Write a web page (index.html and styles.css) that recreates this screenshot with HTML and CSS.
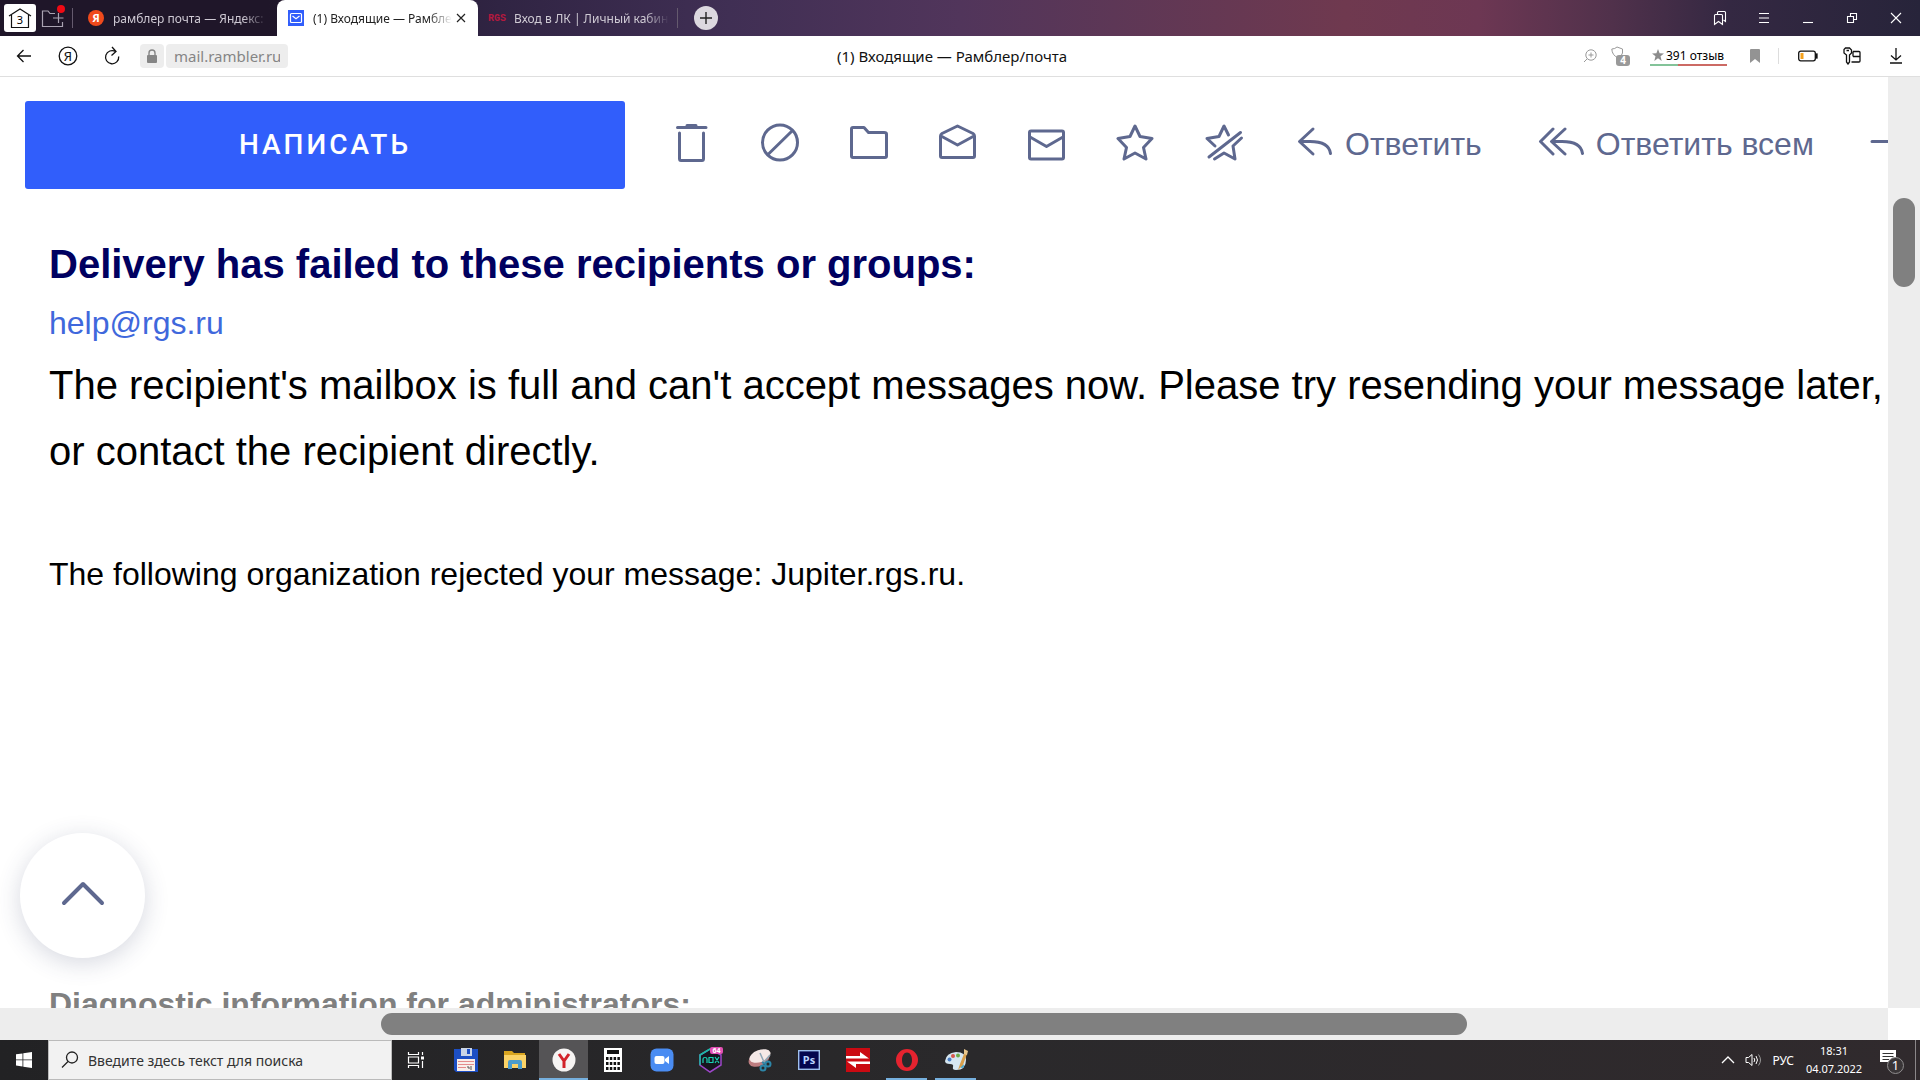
FILE: index.html
```html
<!DOCTYPE html>
<html lang="ru">
<head>
<meta charset="utf-8">
<title>(1) Входящие — Рамблер/почта</title>
<link rel="stylesheet" href="styles.css">
</head>
<body>
<header class="tabbar">
  <button class="home" aria-label="Табло"><svg width="26" height="22" viewBox="0 0 26 22"><path d="M2 9 13 2 24 9M4.500 8V20.500H21.500V8" fill="none" stroke="#111" stroke-width="1.200"/><text x="13" y="17" text-anchor="middle" class="home-num">3</text></svg></button>
  <button class="group" aria-label="Группы вкладок"><svg width="26" height="26" viewBox="0 0 26 26" fill="none" stroke="#aaa3b2" stroke-width="1.200"><path d="M14 8.500H9L7 6H1.500V21.500H21.500V17M17.500 8V18M12 13H22.500"/><circle cx="20" cy="4" r="4" fill="#f00a14" stroke="none"/></svg></button>
  <span class="divider"></span>
  <a class="tab" href="#search"><svg width="16" height="16" viewBox="0 0 16 16"><circle cx="8" cy="8" r="8" fill="#f04a1c"/><text x="8" y="12" text-anchor="middle" class="ya-letter">Я</text></svg><span class="tab-text">рамблер почта — Яндекс:</span></a>
  <div class="tab tab-active"><svg width="16" height="16" viewBox="0 0 16 16"><rect width="16" height="16" fill="#315efb"/><rect x="2.500" y="3.500" width="11" height="9" rx="1" fill="none" stroke="#fff" stroke-width="1.200"/><path d="m4.500 6 3.500 2.800L11.500 6" fill="none" stroke="#fff" stroke-width="1.200"/></svg><a class="tab-text" href="#mail">(1) Входящие — Рамбле</a><button class="tab-close" aria-label="Закрыть вкладку"><svg width="10" height="10" viewBox="0 0 10 10"><path d="m1 1 8 8M9 1 1 9" stroke="#222" stroke-width="1.200"/></svg></button></div>
  <a class="tab tab-last" href="#rgs"><span class="rgs">RGS</span><span class="tab-text">Вход в ЛК | Личный кабин</span></a>
  <span class="divider"></span>
  <button class="plus" aria-label="Новая вкладка"><svg width="12" height="12" viewBox="0 0 12 12"><path d="M6 0V12M0 6H12" stroke="#222" stroke-width="1.400"/></svg></button>
  <div class="window-buttons">
    <button aria-label="Закладки"><svg width="14" height="16" viewBox="0 0 14 16"><path d="M4.500 4V2.500q0-1 1-1H11.500q1 0 1 1V11.500l-2-1.500M1.500 5.500q0-1 1-1H8.500q1 0 1 1V14.500L5.500 11.500 1.500 14.500Z"/></svg></button>
    <button aria-label="Меню"><svg width="12" height="12" viewBox="0 0 12 12"><path d="M1 1.500H11M1 6H11M1 10.500H11"/></svg></button>
    <button aria-label="Свернуть"><svg width="12" height="12" viewBox="0 0 12 12"><path d="M1 10.500H11"/></svg></button>
    <button aria-label="Окно"><svg width="12" height="12" viewBox="0 0 12 12"><path d="M1.500 4.500H7.500V10.500H1.500ZM4.500 4.500V1.500H10.500V7.500H7.500"/></svg></button>
    <button aria-label="Закрыть"><svg width="12" height="12" viewBox="0 0 12 12"><path d="m1 1 10 10M11 1 1 11"/></svg></button>
  </div>
</header>
<nav class="addressbar">
  <div class="address-left">
    <button class="nav-btn" aria-label="Назад"><svg width="16" height="16" viewBox="0 0 16 16"><path d="M15 8H1.500M7.500 2 1.500 8l6 6"/></svg></button>
    <button class="nav-btn" aria-label="Яндекс"><svg width="20" height="20" viewBox="0 0 20 20"><circle cx="10" cy="10" r="8.800"/><text x="10" y="15" text-anchor="middle" class="ya-mark">Я</text></svg></button>
    <button class="nav-btn" aria-label="Обновить"><svg width="18" height="20" viewBox="0 0 18 20"><path d="M12.500 5.500A6.600 6.600 0 1 0 15.700 10.500M9 1l4 4.500-4.500 4"/></svg></button>
    <button class="lock" aria-label="Защита"><svg width="12" height="14" viewBox="0 0 12 14"><rect x="1" y="6" width="10" height="8" rx="1" fill="#858585"/><path d="M3 7V4a3 3 0 0 1 6 0V7" fill="none" stroke="#858585" stroke-width="1.400"/></svg></button>
    <input class="url" aria-label="Адрес" value="mail.rambler.ru">
  </div>
  <div class="page-title">(1) Входящие — Рамблер/почта</div>
  <div class="address-right">
    <button class="zoom-btn" aria-label="Масштаб"><svg width="14" height="14" viewBox="0 0 14 14" fill="none" stroke="#999"><circle cx="8" cy="6" r="5.200"/><path d="M8 3.500V8.500M5.500 6H10.500M4.200 9.800 1 13"/></svg></button>
    <button class="shield" aria-label="Protect"><svg width="20" height="20" viewBox="0 0 20 20"><path d="M6 1 11.500 3V7Q11 10 7 12 1 9 .800 3Q4 3 6 1Z" fill="none" stroke="#999"/><rect x="5" y="9" width="14" height="11" rx="3" fill="#999"/><text x="12" y="18" text-anchor="middle" class="shield-num">4</text></svg></button>
    <a class="reviews" href="#reviews"><svg width="12" height="12" viewBox="0 0 12 12"><path d="m6 0 1.600 4.200L12 4.500 8.500 7.200 9.700 12 6 9.200 2.300 12 3.500 7.200 0 4.500l4.400-.300Z" fill="#8c8c8c"/></svg><span>391 отзыв</span></a>
    <button class="mark" aria-label="В закладки"><svg width="10" height="14" viewBox="0 0 10 14"><path d="M0 1q0-1 1-1H9q1 0 1 1V14L5 10 0 14Z" fill="#939393"/></svg></button>
    <span class="address-divider"></span>
    <button class="nav-btn" aria-label="Батарея"><svg width="20" height="12" viewBox="0 0 20 12"><rect x=".700" y="1.200" width="16.600" height="9.600" rx="2"/><path d="M18 4h1v4h-1Z" fill="#111"/><rect x="2.500" y="3" width="3" height="6" fill="#f5a11c" stroke="none"/></svg></button>
    <button class="nav-btn" aria-label="Пароли"><svg width="18" height="18" viewBox="0 0 18 18"><path d="M2.500 1H6.500L8.500 3V6L6.500 8V15L5 17 3.500 15V8L1 6V2.500ZM3.500 3.500H6M10 4.500H16Q17 4.500 17 5.500V14Q17 15 16 15H8.500M10 9.500H17M10 9.500V4.500"/></svg></button>
    <button class="nav-btn" aria-label="Загрузки"><svg width="14" height="16" viewBox="0 0 14 16"><path d="M7 0V12M2 7.500 7 12l5-4.500M1 15H13"/></svg></button>
  </div>
</nav>
<main class="viewport">
  <div class="page">
    <div class="mailbar">
      <button class="compose">НАПИСАТЬ</button>
      <div class="tools">
        <button aria-label="Удалить"><svg width="40" height="40" viewBox="0 0 40 40"><path d="M6.500 5.500H35M16 3.500H25M8.500 11V36.500Q8.500 38.500 10 38.500H31Q32.500 38.500 32.500 36.500V11"/></svg></button>
        <button aria-label="Спам"><svg width="40" height="40" viewBox="0 0 40 40"><circle cx="20" cy="20.500" r="17.500"/><path d="M8.500 32 32 9"/></svg></button>
        <button aria-label="В папку"><svg width="40" height="40" viewBox="0 0 40 40"><path d="M4 5.500H15L19.500 10.500H35Q37.500 10.500 37.500 12V34Q37.500 35.500 36 35.500H4Q2.500 35.500 2.500 34V7Q2.500 5.500 4 5.500Z"/></svg></button>
        <button aria-label="Прочитано"><svg width="40" height="40" viewBox="0 0 40 40"><path d="M2.500 14Q2.500 12.500 4 11.500L19.500 4 35 11.500Q36.500 12.500 36.500 14V34Q36.500 35.500 35 35.500H4Q2.500 35.500 2.500 34ZM3 14 19.500 23 36 14"/></svg></button>
        <button aria-label="Не прочитано"><svg width="40" height="40" viewBox="0 0 40 40"><rect x="2.500" y="9" width="34" height="28" rx="1.500"/><path d="m3 15 16.500 9.500L36 15"/></svg></button>
        <button aria-label="Отметить"><svg width="40" height="40" viewBox="0 0 40 40"><path d="m19 4 5 10.500 12 2-8.500 9L30 37 19 31 8 37l2.500-11.500-8.500-9 12-2Z"/></svg></button>
        <button aria-label="Снять отметку"><svg width="40" height="40" viewBox="0 0 40 40"><path d="M23.500 13 19 4 14 14.500 2 16.500 10 24M4 35 35.500 10.500M36.500 16 28 24 30 37 19 31 9.500 37"/></svg></button>
      </div>
      <button class="reply"><svg width="36" height="32" viewBox="0 0 36 32"><path d="M16 3 2.500 15.500 16 28M3 15.500H13Q32 15.500 33.500 27.500"/></svg>Ответить</button>
      <button class="reply"><svg width="46" height="32" viewBox="0 0 46 32"><path d="M15 3 2.500 15.500 15 28M27 3 13.500 15.500 27 28M14 15.500H24Q43 15.500 44.500 27.500"/></svg>Ответить всем</button>
      <button class="reply" aria-label="Переслать"><svg width="40" height="32" viewBox="0 0 40 32"><path d="M2 15.500H37M26 3 38 15.500 26 28"/></svg></button>
    </div>
    <article class="letter">
      <h1>Delivery has failed to these recipients or groups:</h1>
      <p class="recipient"><a href="mailto:help@rgs.ru">help@rgs.ru</a></p>
      <p class="reason">The recipient's mailbox is full and can't accept messages now. Please try resending your message later, or contact the recipient directly.</p>
      <p class="rejected">The following organization rejected your message: Jupiter.rgs.ru.</p>
      <h2>Diagnostic information for administrators:</h2>
    </article>
    <button class="to-top" aria-label="Наверх"><svg width="48" height="30" viewBox="0 0 48 30"><path d="M5 22 24 3 43 22" fill="none" stroke="#5e688f" stroke-width="4" stroke-linecap="round" stroke-linejoin="round"/></svg></button>
  </div>
  <div class="vscroll"><div class="vthumb"></div></div>
  <div class="hscroll"><div class="hthumb"></div></div>
</main>
<footer class="taskbar">
  <button class="start" aria-label="Пуск"><svg width="16" height="16" viewBox="0 0 16 16" fill="#fff"><path d="M0 2.300 6.500 1.400V7.500H0ZM7.300 1.300 16 0V7.500H7.300ZM0 8.300H6.500V14.500L0 13.600ZM7.300 8.300H16V16L7.300 14.700Z"/></svg></button>
  <label class="search"><svg width="18" height="18" viewBox="0 0 18 18" fill="none" stroke="#222" stroke-width="1.300"><circle cx="11" cy="6.500" r="5.500"/><path d="M7 10.500 1 16.500"/></svg><input aria-label="Поиск" placeholder="Введите здесь текст для поиска"></label>
  <button class="app task-view" aria-label="Представление задач"><svg width="18" height="16" viewBox="0 0 18 16" fill="none" stroke="#fff" stroke-width="1.200"><path d="M1.500 0V2.500H11.500V0M1.500 16V13.500H11.500V16M1.500 5H11.500V11H1.500ZM15.500 0V3M15.500 9V16"/><path d="M14 4.500h3v3h-3Z" fill="#fff" stroke="none"/></svg></button>
  <button class="app" aria-label="Total Commander"><svg width="24" height="24" viewBox="0 0 24 24"><path d="M0 1H24V24H2L0 22Z" fill="#1d4fc4"/><path d="M7 0H18V8H7Z" fill="#c9d4e6"/><path d="M13 1h3v5h-3Z" fill="#1d4fc4"/><path d="M3 11H21V23H3Z" fill="#f8eeea"/><path d="M4 13.500H20M4 16.500H20M4 19.500H12" stroke="#e38b8b"/><path d="M13 19h2v2M17 18v4" stroke="#555" fill="none"/></svg></button>
  <button class="app" aria-label="Проводник"><svg width="24" height="20" viewBox="0 0 24 20"><path d="M1 1H9L11 3H22V8H1Z" fill="#d9a520"/><path d="M1 5H23V18H1Z" fill="#fbd367"/><path d="M5 19V12Q5 10 7 10H17Q19 10 19 12V19H15V14H9V19Z" fill="#4b9ccc"/></svg></button>
  <button class="app app-current" aria-label="Яндекс Браузер"><svg width="24" height="24" viewBox="0 0 24 24"><circle cx="12" cy="12" r="11.500" fill="#f6f4f3"/><path d="m7 6 5 7 5-7M12 12V20" fill="none" stroke="#d2232a" stroke-width="3"/></svg></button>
  <button class="app" aria-label="Калькулятор"><svg width="18" height="24" viewBox="0 0 18 24"><path d="M0 0H18V24H0Z" fill="#fff"/><path d="M3 4H15" stroke="#111" stroke-width="4"/><path d="M2 10.500H16M2 15.500H16M2 20.500H16" stroke="#111" stroke-width="3" stroke-dasharray="2.500 1.300"/></svg></button>
  <button class="app" aria-label="Zoom"><svg width="24" height="24" viewBox="0 0 24 24"><rect x=".500" y=".500" width="23" height="23" rx="6" fill="#4a8cf2"/><rect x="4.500" y="8" width="10" height="8" rx="2" fill="#fff"/><path d="m15 11 4-3v8l-4-3Z" fill="#fff"/></svg></button>
  <button class="app" aria-label="Nox"><svg width="26" height="26" viewBox="0 0 26 26"><path d="M12 2 23 8V18L12 25 2 18V8Z" fill="#17151f" stroke="#9c46c8" stroke-width="1.500"/><path d="M2 18V8L12 2" fill="none" stroke="#16bfa6" stroke-width="1.500"/><path d="M5 16V12Q5 10.500 7 10.500T9 12V16M11 10.500H15V15.500H11ZM17 10l4 6M21 10l-4 6" fill="none" stroke="#19d3b4" stroke-width="1.200"/><rect x="12" width="13" height="7" rx="2" fill="#e34fb4"/><text x="18.500" y="6" text-anchor="middle" class="nox-num">64</text></svg></button>
  <button class="app" aria-label="Ножницы"><svg width="26" height="24" viewBox="0 0 26 24"><ellipse cx="12" cy="11" rx="11" ry="7" transform="rotate(-25 12 11)" fill="#bd7d80"/><ellipse cx="13" cy="8" rx="11" ry="6" transform="rotate(-20 13 8)" fill="#f5e9e7"/><path d="m13 5 4 9M23 7l-7 8" stroke="#8ea5b5" stroke-width="1.500"/><g fill="none" stroke="#2d86a8" stroke-width="2"><circle cx="16" cy="20" r="2.500"/><circle cx="21" cy="16" r="2.500"/><path d="m15 14 3 2"/></g></svg></button>
  <button class="app" aria-label="Photoshop"><svg width="22" height="20" viewBox="0 0 22 20"><rect x=".700" y=".700" width="20.600" height="18.600" fill="#04064f" stroke="#9fc0ee" stroke-width="1.400"/><text x="11" y="14" text-anchor="middle" class="ps">Ps</text></svg></button>
  <button class="app" aria-label="Конвертер"><svg width="24" height="24" viewBox="0 0 24 24"><path d="M0 0H24V24H0Z" fill="#cb0a12"/><path d="M0 10.500H23L14 4V8H0ZM24 13.500H1L10 20V16H24Z" fill="#fff"/></svg></button>
  <button class="app app-open" aria-label="Opera"><svg width="22" height="22" viewBox="0 0 22 22"><path fill-rule="evenodd" d="M11 0a11 11 0 1 0 0 22 11 11 0 0 0 0-22Zm0 3.500c3 0 5 3.300 5 7.500s-2 7.500-5 7.500-5-3.300-5-7.500 2-7.500 5-7.500Z" fill="#e5232f"/></svg></button>
  <button class="app app-open" aria-label="Paint"><svg width="24" height="24" viewBox="0 0 24 24"><path d="M1 13Q2 5 12 4q10 0 10 8 0 10-10 10-4 0-3-3 1-3-3-3-5 0-5-3Z" fill="#d5e6f1"/><circle cx="5.500" cy="11.500" r="2" fill="#4b7ec5"/><circle cx="9" cy="8" r="2" fill="#d6574d"/><circle cx="14" cy="7.500" r="2" fill="#6eab48"/><circle cx="18" cy="18" r="2" fill="#43a8d3"/><path d="m14 22 2-6 4-10 3 0-4 11Z" fill="#d99f4c"/><path d="m20 6 0-5 4 2-1 4Z" fill="#e6c58c"/></svg></button>
  <div class="tray">
    <button class="tray-up" aria-label="Скрытые значки"><svg width="14" height="8" viewBox="0 0 14 8"><path d="m1 7 6-6 6 6" fill="none" stroke="#fff" stroke-width="1.300"/></svg></button>
    <button class="tray-sound" aria-label="Громкость"><svg width="17" height="14" viewBox="0 0 17 14" fill="none" stroke="#fff"><path d="M1 4.500H3.500L7 1.500V12.500L3.500 9.500H1ZM9 5q1.500 2 0 4M11 3q3 4 0 8"/><path d="M13.500 1.500q4 5.500 0 11" stroke="#999"/></svg></button>
    <button class="lang">РУС</button>
    <time class="clock" datetime="2022-07-04T18:31"><span>18:31</span><span>04.07.2022</span></time>
    <button class="notice" aria-label="Уведомления"><svg width="26" height="26" viewBox="0 0 26 26"><path d="M1 1H17V13H12L9 17V13H1Z" fill="#fff"/><path d="M3.500 4.500H14.500M3.500 7.500H14.500M3.500 10.500H10" stroke="#333"/><circle cx="16.500" cy="16.500" r="8" fill="#393537" stroke="#8f8d8e"/><text x="16.500" y="21" text-anchor="middle" class="notice-num">1</text></svg></button>
  </div>
</footer>
</body>
</html>
```
FILE: styles.css
```css
* { box-sizing: border-box; }

body {
  margin: 0;
  height: 100vh;
  display: flex;
  flex-direction: column;
  overflow: hidden;
  font-family: "Noto Sans", "Open Sans", sans-serif;
  font-size: 12px;
  background: #fff;
}

button {
  display: flex;
  align-items: center;
  justify-content: center;
  flex: none;
  margin: 0;
  padding: 0;
  border: 0;
  background: none;
  color: inherit;
  font: inherit;
}

a { color: inherit; text-decoration: none; }
input { min-width: 0; border: 0; outline: 0; font: inherit; }
svg { display: block; flex: none; }
h1, h2, p { margin: 0; }

/* Tab strip */
.tabbar {
  display: flex;
  align-items: center;
  flex: none;
  height: 36px;
  padding: 0 2px 0 4px;
  background: linear-gradient(90deg, #1f1629 0, #1f1629 14%, #302443 26%, #402f54 38%, #51355b 50%, #5d3756 58%, #6f394f 70%, #6d3753 77%, #50314b 84%, #342842 90%, #27243a 100%);
}
.home { width: 32px; height: 28px; border-radius: 3px; background: #fff; }
.home-num { font-size: 11px; }
.group { width: 26px; margin: 0 5px; }
.divider { flex: none; width: 1px; height: 20px; background: #655a6e; }
.tab {
  display: flex;
  align-items: center;
  flex: none;
  gap: 9px;
  width: 204px;
  height: 36px;
  padding: 0 10px 0 15px;
  color: #cfcad4;
}
.tab-text {
  flex: 1;
  min-width: 0;
  overflow: hidden;
  white-space: nowrap;
  mask-image: linear-gradient(90deg, #000 calc(100% - 24px), transparent);
}
.tab-active {
  width: 201px;
  padding: 0 11px;
  border-radius: 8px 8px 0 0;
  background: #fff;
  color: #222;
}
.tab-close { width: 12px; margin-left: -6px; }
.tab-last { width: 199px; gap: 8px; padding: 0 8px 0 10px; }
.rgs { color: #b3193f; font: bold 10px "Liberation Mono", monospace; }
.ya-letter { fill: #fff; font-size: 11px; font-weight: bold; }
.plus { width: 24px; height: 24px; margin-left: 16px; border-radius: 50%; background: #dcd8df; }
.window-buttons { display: flex; margin-left: auto; }
.window-buttons button { width: 44px; height: 36px; }
.window-buttons path { fill: none; stroke: #fff; stroke-width: 1.1; }

/* Address bar */
.addressbar {
  display: grid;
  grid-template-columns: 1fr auto 1fr;
  align-items: center;
  flex: none;
  height: 41px;
  padding: 0 18px 0 2px;
  border-bottom: 1px solid #dfdfdf;
}
.address-left, .address-right { display: flex; align-items: center; }
.address-right { justify-content: flex-end; margin-right: -16px; }
.nav-btn { width: 44px; height: 40px; }
.nav-btn svg { fill: none; stroke: #111; stroke-width: 1.3; }
.nav-btn .ya-mark { font-size: 13px; fill: #111; stroke: none; }
.lock { width: 24px; height: 24px; margin: 0 2px 0 6px; border-radius: 4px; background: #ededed; }
.url { width: 122px; height: 24px; padding: 0 8px; border-radius: 4px; background: #ededed; color: #858585; font-size: 15px; }
.page-title { font-size: 15px; color: #111; }
.shield { margin: 0 19px 0 14px; }
.shield-num { fill: #fff; font-size: 10px; font-weight: bold; }
.reviews {
  display: flex;
  align-items: center;
  gap: 2px;
  width: 77px;
  height: 20px;
  padding-left: 2px;
  border-bottom: 2px solid;
  border-image: linear-gradient(90deg, #83c399 36%, #cc6a64 37%) 1;
  white-space: nowrap;
}
.mark { margin: 0 18px 0 23px; }
.address-divider { width: 1px; height: 16px; margin-right: 7px; background: #ddd; }

/* Browser viewport with its scrollbars */
.viewport {
  flex: 1;
  min-height: 0;
  display: grid;
  grid-template: minmax(0, 1fr) 32px / minmax(0, 1fr) 32px;
}
.page { position: relative; overflow: hidden; font-family: "Liberation Sans", Arial, sans-serif; font-size: 32px; }
.vscroll { padding: 121px 5px 0; background: #ededed; }
.vthumb { height: 89px; border-radius: 11px; background: #808080; }
.hscroll { padding: 5px 0; background: #ededed; }
.hthumb { width: 57.5%; height: 22px; margin-left: 20.2%; border-radius: 11px; background: #808080; }

/* Mail actions */
.mailbar { display: flex; align-items: center; padding: 24px 0 0 25px; color: #5e688f; }
.compose {
  width: 600px;
  height: 88px;
  padding-bottom: 2px;
  border-radius: 3px;
  background: #315efb;
  color: #fff;
  font-family: Roboto, "Liberation Sans", sans-serif;
  font-size: 28px;
  font-weight: 500;
  letter-spacing: 3px;
}
.tools { display: flex; gap: 49px; margin: 0 52px 6px 46px; }
.tools path, .tools circle, .tools rect, .reply path {
  fill: none;
  stroke: #5e688f;
  stroke-width: 3;
  stroke-linecap: round;
  stroke-linejoin: round;
}
.reply { gap: 12px; margin: 0 56px 2px 0; white-space: nowrap; }
.reply svg { margin-bottom: 4px; }

/* Letter */
.letter { padding: 51px 0 0 49px; color: #000; line-height: 48px; }
.letter h1 { font-size: 40px; line-height: 48px; color: #000060; }
.recipient { margin-top: 11px; }
.recipient a { color: #3f68dc; }
.reason { margin-top: 5px; font-size: 40px; line-height: 66px; }
.rejected { margin-top: 66px; }
.letter h2 { margin-top: 382px; font-size: 32px; line-height: 48px; color: #808080; }
.to-top {
  position: absolute;
  left: 20px;
  bottom: 50px;
  width: 125px;
  height: 125px;
  border-radius: 50%;
  background: #fff;
  box-shadow: 0 5px 25px rgba(52, 59, 99, .2);
}

/* Windows taskbar */
.taskbar { display: flex; flex: none; height: 40px; color: #fff; background: linear-gradient(90deg, #222224, #2a292b 50%, #302a2d); }
.start { width: 48px; }
.search { display: flex; align-items: center; gap: 9px; width: 344px; padding: 0 12px; border: 1px solid #bbb; background: #f2f2f2; }
.search input { flex: 1; padding: 0; background: none; font-size: 14px; }
.search input::placeholder { color: #333; opacity: 1; }
.app { width: 49px; border-bottom: 2px solid transparent; border-top: 2px solid transparent; }
.task-view { padding-right: 1px; }
.app-current { border-bottom-color: #76b0de; background: #555456; border-top-color: #555456; }
.app-open { width: 41px; margin: 0 4px; border-bottom-color: #76b0de; }
.ps { fill: #b9d4ff; font-size: 11px; font-weight: bold; }
.nox-num { fill: #fff; font-size: 7px; font-weight: bold; }
.tray { display: flex; align-items: center; margin: 0 4px 0 auto; border-right: 1px solid #8b8789; }
.tray-sound { margin: 0 10px; }
.clock { display: flex; flex-direction: column; align-items: center; width: 80px; line-height: 18px; font-size: 11px; }
.notice { margin: 4px 10px 0 5px; }
.notice-num { fill: #fff; font-size: 13px; }
```
